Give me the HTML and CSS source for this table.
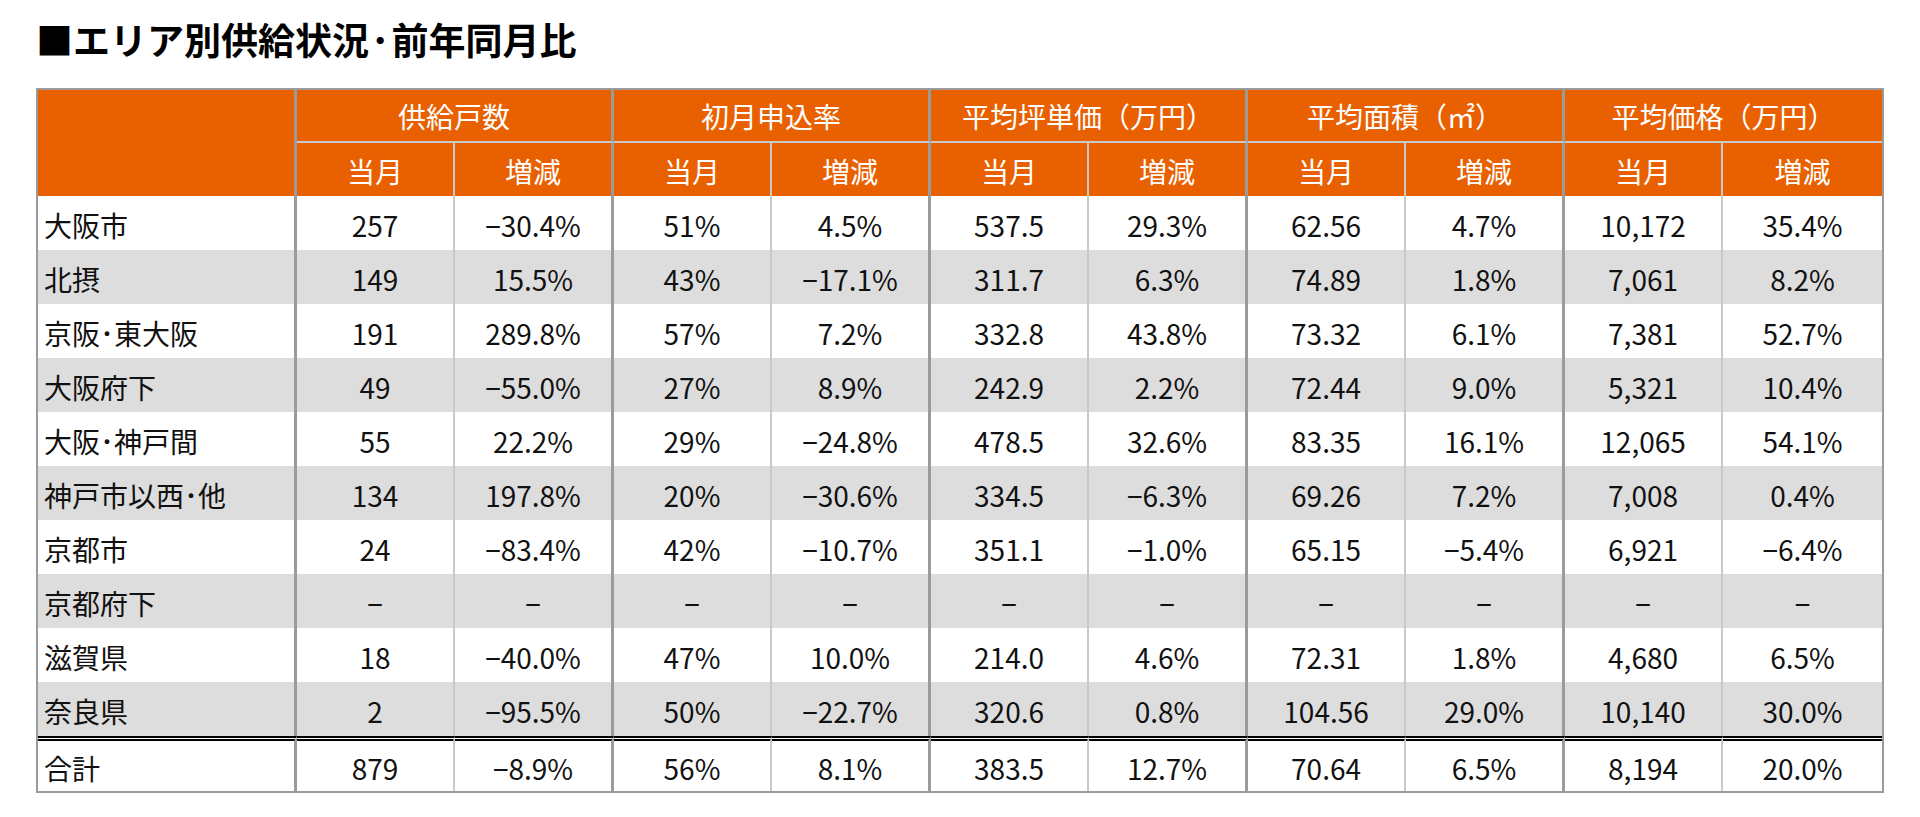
FILE: index.html
```html
<!DOCTYPE html>
<html lang="ja">
<head>
<meta charset="utf-8">
<title>エリア別供給状況・前年同月比</title>
<link rel="stylesheet" href="styles.css">
</head>
<body>
<main class="page">
  <h1 class="title">■エリア別供給状況<span class="dot">･</span>前年同月比</h1>
  <table class="stats">
    <colgroup>
      <col class="c-label">
      <col class="c-a"><col class="c-b">
      <col class="c-a"><col class="c-b">
      <col class="c-a"><col class="c-b">
      <col class="c-a"><col class="c-b">
      <col class="c-a"><col class="c-b">
    </colgroup>
    <thead>
      <tr class="h1row">
        <th class="corner" rowspan="2"></th>
        <th class="grp" colspan="2">供給戸数</th>
        <th class="grp" colspan="2">初月申込率</th>
        <th class="grp" colspan="2">平均坪単価（万円）</th>
        <th class="grp" colspan="2">平均面積（㎡）</th>
        <th class="grp last" colspan="2">平均価格（万円）</th>
      </tr>
      <tr class="h2row">
        <th class="a">当月</th><th class="b">増減</th>
        <th class="a">当月</th><th class="b">増減</th>
        <th class="a">当月</th><th class="b">増減</th>
        <th class="a">当月</th><th class="b">増減</th>
        <th class="a">当月</th><th class="b last">増減</th>
      </tr>
    </thead>
    <tbody>
      <tr class="odd"><th class="lbl">大阪市</th><td class="a">257</td><td class="b">−30.4%</td><td class="a">51%</td><td class="b">4.5%</td><td class="a">537.5</td><td class="b">29.3%</td><td class="a">62.56</td><td class="b">4.7%</td><td class="a">10,172</td><td class="b last">35.4%</td></tr>
      <tr class="even"><th class="lbl">北摂</th><td class="a">149</td><td class="b">15.5%</td><td class="a">43%</td><td class="b">−17.1%</td><td class="a">311.7</td><td class="b">6.3%</td><td class="a">74.89</td><td class="b">1.8%</td><td class="a">7,061</td><td class="b last">8.2%</td></tr>
      <tr class="odd"><th class="lbl">京阪･東大阪</th><td class="a">191</td><td class="b">289.8%</td><td class="a">57%</td><td class="b">7.2%</td><td class="a">332.8</td><td class="b">43.8%</td><td class="a">73.32</td><td class="b">6.1%</td><td class="a">7,381</td><td class="b last">52.7%</td></tr>
      <tr class="even"><th class="lbl">大阪府下</th><td class="a">49</td><td class="b">−55.0%</td><td class="a">27%</td><td class="b">8.9%</td><td class="a">242.9</td><td class="b">2.2%</td><td class="a">72.44</td><td class="b">9.0%</td><td class="a">5,321</td><td class="b last">10.4%</td></tr>
      <tr class="odd"><th class="lbl">大阪･神戸間</th><td class="a">55</td><td class="b">22.2%</td><td class="a">29%</td><td class="b">−24.8%</td><td class="a">478.5</td><td class="b">32.6%</td><td class="a">83.35</td><td class="b">16.1%</td><td class="a">12,065</td><td class="b last">54.1%</td></tr>
      <tr class="even"><th class="lbl">神戸市以西･他</th><td class="a">134</td><td class="b">197.8%</td><td class="a">20%</td><td class="b">−30.6%</td><td class="a">334.5</td><td class="b">−6.3%</td><td class="a">69.26</td><td class="b">7.2%</td><td class="a">7,008</td><td class="b last">0.4%</td></tr>
      <tr class="odd"><th class="lbl">京都市</th><td class="a">24</td><td class="b">−83.4%</td><td class="a">42%</td><td class="b">−10.7%</td><td class="a">351.1</td><td class="b">−1.0%</td><td class="a">65.15</td><td class="b">−5.4%</td><td class="a">6,921</td><td class="b last">−6.4%</td></tr>
      <tr class="even"><th class="lbl">京都府下</th><td class="a">−</td><td class="b">−</td><td class="a">−</td><td class="b">−</td><td class="a">−</td><td class="b">−</td><td class="a">−</td><td class="b">−</td><td class="a">−</td><td class="b last">−</td></tr>
      <tr class="odd"><th class="lbl">滋賀県</th><td class="a">18</td><td class="b">−40.0%</td><td class="a">47%</td><td class="b">10.0%</td><td class="a">214.0</td><td class="b">4.6%</td><td class="a">72.31</td><td class="b">1.8%</td><td class="a">4,680</td><td class="b last">6.5%</td></tr>
      <tr class="even"><th class="lbl">奈良県</th><td class="a">2</td><td class="b">−95.5%</td><td class="a">50%</td><td class="b">−22.7%</td><td class="a">320.6</td><td class="b">0.8%</td><td class="a">104.56</td><td class="b">29.0%</td><td class="a">10,140</td><td class="b last">30.0%</td></tr>
    </tbody>
    <tfoot>
      <tr class="total"><th class="lbl">合計</th><td class="a">879</td><td class="b">−8.9%</td><td class="a">56%</td><td class="b">8.1%</td><td class="a">383.5</td><td class="b">12.7%</td><td class="a">70.64</td><td class="b">6.5%</td><td class="a">8,194</td><td class="b last">20.0%</td></tr>
    </tfoot>
  </table>
</main>
</body>
</html>
```

FILE: styles.css
```css
html, body {
  margin: 0;
  padding: 0;
  background: #ffffff;
}

body {
  font-family: "Noto Sans CJK JP", "Noto Sans", sans-serif;
  color: #111111;
}

.page {
  padding: 21px 36px 0 36px;
}

.title {
  margin: 0;
  font-size: 37px;
  line-height: 37px;
  font-weight: 700;
  color: #000000;
  letter-spacing: 0;
}

.title .dot {
  margin: 0 2px;
}

.stats {
  margin-top: 30px;
  width: 1848px;
  table-layout: fixed;
  border-collapse: separate;
  border-spacing: 0;
  border: 2px solid #9b9b9b;
  font-size: 28px;
}

.c-label { width: 259px; }
.c-a { width: 158px; }
.c-b { width: 159px; }

.stats th,
.stats td {
  box-sizing: border-box;
  padding: 0;
  font-weight: 400;
  text-align: center;
  vertical-align: middle;
  line-height: 30px;
  white-space: nowrap;
}

/* header */
.stats thead th {
  background: #e86000;
  color: #ffffff;
}

.corner {
  border-right: 3px solid #9b9b9b;
}

.h1row th {
  height: 53px;
}

.h1row .grp {
  border-right: 3px solid #9b9b9b;
  border-bottom: 2px solid #c9c9c9;
  padding-top: 1px;
}

.h2row th {
  height: 53px;
  padding-top: 2px;
}

/* column separators */
.stats .a {
  border-right: 2px solid #c9c9c9;
}

.stats .b,
.stats .grp {
  border-right: 3px solid #9b9b9b;
}

.stats .last {
  border-right: none;
}

/* body */
.stats .lbl {
  text-align: left;
  padding-left: 6px;
  border-right: 3px solid #9b9b9b;
}

.stats tbody tr {
  height: 54px;
}

.stats tbody th,
.stats tbody td {
  padding-top: 4px;
}

.odd th,
.odd td {
  background: #ffffff;
}

.even th,
.even td {
  background: #dddddd;
}

/* total */
.total th,
.total td {
  height: 55px;
  background: #ffffff;
  border-top: 5px double #000000;
  padding-top: 3px;
}
```
